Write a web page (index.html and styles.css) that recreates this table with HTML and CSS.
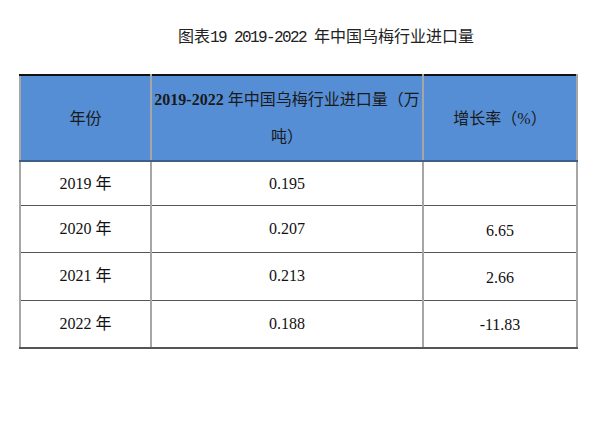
FILE: index.html
```html
<!DOCTYPE html>
<html lang="zh">
<head>
    <meta charset="UTF-8">
    <title>2019-2022年中国乌梅行业进口量</title>
    <link rel="stylesheet" href="styles.css">
</head>
<body>

<div class="chart-title">图表<span class="latin">19 2019-2022 </span>年中国乌梅行业进口量</div>

<table class="data-table">
    <thead>
        <tr>
            <th class="col-year">年份</th>
            <th class="col-amount"><span class="num">2019-2022 </span>年中国乌梅行业进口量（万<br>吨）</th>
            <th class="col-rate">增长率（%）</th>
        </tr>
    </thead>
    <tbody>
        <tr>
            <td>2019 年</td>
            <td>0.195</td>
            <td></td>
        </tr>
        <tr>
            <td>2020 年</td>
            <td>0.207</td>
            <td class="low">6.65</td>
        </tr>
        <tr>
            <td>2021 年</td>
            <td>0.213</td>
            <td class="low">2.66</td>
        </tr>
        <tr>
            <td>2022 年</td>
            <td>0.188</td>
            <td class="low">-11.83</td>
        </tr>
    </tbody>
</table>

</body>
</html>
```

FILE: styles.css
```css
body {
    margin: 0;
    padding: 0;
    background-color: white;
    color: #111;
    font-family: "Liberation Serif", "Noto Sans CJK SC", serif;
}

.chart-title {
    padding: 25px 0 0 178px;
    height: 74px;
    box-sizing: border-box;
    font-family: "Noto Sans CJK SC", sans-serif;
    font-size: 16px;
    line-height: 20px;
    color: #222;
    white-space: nowrap;
}

.chart-title .latin {
    font-family: "Liberation Mono", monospace;
    letter-spacing: -1.6px;
}

.data-table {
    margin-left: 19px;
    width: 551px;
    border-collapse: collapse;
    table-layout: fixed;
    font-size: 16px;
}

.data-table th,
.data-table td {
    text-align: center;
    padding: 0;
    border-left: 2px solid #a6a6a6;
    border-right: 2px solid #a6a6a6;
    border-bottom: 1px solid #555;
}

.data-table th {
    height: 84px;
    background-color: #558ed5;
    border-top: 2px solid #111;
    border-bottom: 2px solid #3f5f87;
    font-weight: normal;
    line-height: 37px;
    color: #1a1a1a;
}

.col-year {
    width: 129px;
}

.col-amount {
    width: 270px;
}

.col-rate {
    width: 152px;
}

.col-amount .num {
    font-weight: bold;
}

.data-table td {
    height: 43.2px;
    line-height: 20px;
}

.data-table td.low {
    padding-top: 3px;
}

.data-table tbody tr:last-child td {
    border-bottom: 2px solid #555;
}
```
